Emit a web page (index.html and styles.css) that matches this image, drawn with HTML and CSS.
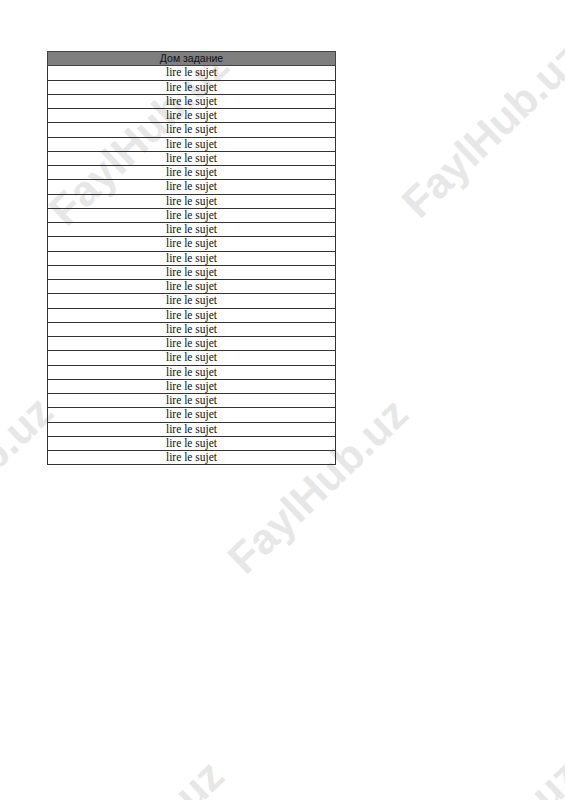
FILE: index.html
```html
<!DOCTYPE html>
<html lang="ru">
<head>
<meta charset="utf-8">
<title>Дом задание</title>
<link rel="stylesheet" href="styles.css">
</head>
<body>
<div class="page">
  <div class="watermarks" aria-hidden="true">
    <span class="wm wm1">FaylHub.uz</span>
    <span class="wm wm2">FaylHub.uz</span>
    <span class="wm wm3">FaylHub.uz</span>
    <span class="wm wm4">FaylHub.uz</span>
    <span class="wm wm5">FaylHub.uz</span>
    <span class="wm wm6">FaylHub.uz</span>
  </div>
  <table class="sheet">
    <thead>
      <tr><th>Дом задание</th></tr>
    </thead>
    <tbody>
      <tr><td>lire le sujet</td></tr>
      <tr><td>lire le sujet</td></tr>
      <tr><td>lire le sujet</td></tr>
      <tr><td>lire le sujet</td></tr>
      <tr><td>lire le sujet</td></tr>
      <tr><td>lire le sujet</td></tr>
      <tr><td>lire le sujet</td></tr>
      <tr><td>lire le sujet</td></tr>
      <tr><td>lire le sujet</td></tr>
      <tr><td>lire le sujet</td></tr>
      <tr><td>lire le sujet</td></tr>
      <tr><td>lire le sujet</td></tr>
      <tr><td>lire le sujet</td></tr>
      <tr><td>lire le sujet</td></tr>
      <tr><td>lire le sujet</td></tr>
      <tr><td>lire le sujet</td></tr>
      <tr><td>lire le sujet</td></tr>
      <tr><td>lire le sujet</td></tr>
      <tr><td>lire le sujet</td></tr>
      <tr><td>lire le sujet</td></tr>
      <tr><td>lire le sujet</td></tr>
      <tr><td>lire le sujet</td></tr>
      <tr><td>lire le sujet</td></tr>
      <tr><td>lire le sujet</td></tr>
      <tr><td>lire le sujet</td></tr>
      <tr><td>lire le sujet</td></tr>
      <tr><td>lire le sujet</td></tr>
      <tr><td>lire le sujet</td></tr>
    </tbody>
  </table>
</div>
</body>
</html>
```

FILE: styles.css
```css
html, body {
  margin: 0;
  padding: 0;
  background: #ffffff;
}

.page {
  position: relative;
  width: 565px;
  height: 800px;
  overflow: hidden;
  padding: 51px 0 0 47px;
  box-sizing: border-box;
}

.watermarks {
  position: absolute;
  inset: 0;
  overflow: hidden;
  z-index: 0;
  pointer-events: none;
}

.wm {
  position: absolute;
  transform: translate(-50%, -50%) rotate(-44deg);
  font-family: "Liberation Sans", Arial, sans-serif;
  font-weight: bold;
  font-size: 43px;
  line-height: 1;
  color: #e7e7e7;
  white-space: nowrap;
}

.wm1 { left: 139px; top: 138px; }
.wm2 { left: 492px; top: 130px; }
.wm3 { left: -37px; top: 484px; }
.wm4 { left: 318px; top: 486px; }
.wm5 { left: 134px; top: 848px; }
.wm6 { left: 490px; top: 848px; }

.sheet {
  position: relative;
  z-index: 1;
  border-collapse: collapse;
  width: 289px;
  table-layout: fixed;
}

.sheet th,
.sheet td {
  border: 1px solid #333333;
  padding: 0;
  height: 13.25px;
  line-height: 13px;
  text-align: center;
  color: #111111;
  white-space: nowrap;
}

.sheet th {
  background: #7f7f7f;
  font-family: "Liberation Sans", Arial, sans-serif;
  font-weight: normal;
  font-size: 10.5px;
  border-color: #444444;
}

.sheet td {
  background: transparent;
  font-family: "Liberation Serif", "Times New Roman", serif;
  font-size: 11.5px;
}
```
